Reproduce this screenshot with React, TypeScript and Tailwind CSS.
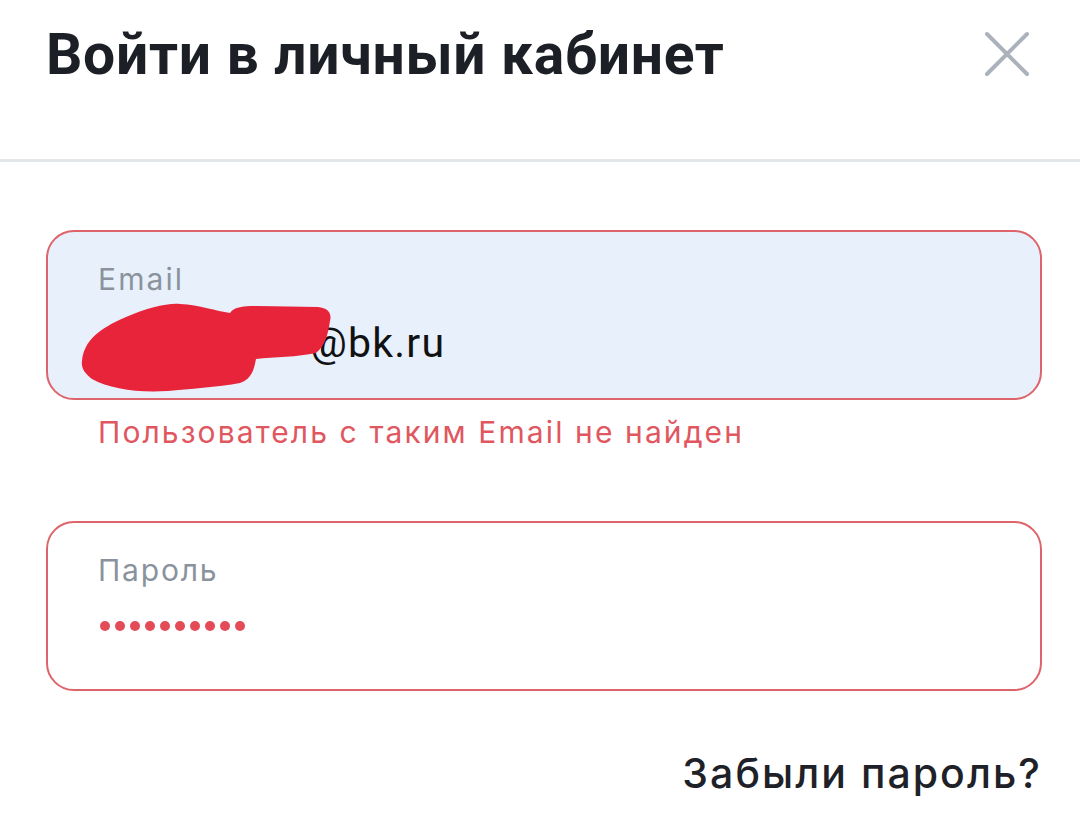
const Scribble = () => (
    <svg className="absolute left-[-20px] top-[-20px]" width="260" height="95" viewBox="0 0 260 95">
        <path
            d="M4 62 C6 42 20 30 48 18 C70 9 88 4 102 5 C122 6 138 12 152 14 C156 8 164 7 180 7 L240 8 C250 9 254 14 252 22 C250 34 248 46 238 54 C220 58 196 58 178 60 C176 70 174 80 162 84 C140 88 110 90 90 92 C60 94 32 90 14 80 C6 74 3 68 4 62 Z"
            fill="#e8243a"
        />
    </svg>
);

const CloseIcon = () => (
    <svg width="46" height="46" viewBox="0 0 46 46" className="mt-[7px]">
        <path d="M3 3 L43 43 M43 3 L3 43" stroke="#abb2bb" strokeWidth="4" strokeLinecap="round" />
    </svg>
);

export default function App() {
    return (
        <div className="w-[1080px] h-[828px] bg-white overflow-hidden" style={{ fontFamily: "Roboto, 'Noto Sans', sans-serif" }}>
            {/* Header */}
            <div className="flex items-start justify-between pl-[46px] pr-[50px] pt-[24px] h-[162px] border-b-[3px] border-[#e3e7ea]">
                <h1 className="text-[57px] leading-[62px] font-bold text-[#1c2026] tracking-[0.012em]">Войти в личный кабинет</h1>
                <CloseIcon />
            </div>

            <div className="pl-[46px] pr-[38px] pt-[68px]" style={{ fontFamily: "Inter, 'Noto Sans', sans-serif" }}>
                {/* Email */}
                <div className="h-[170px] rounded-[28px] border-2 border-[#de646b] bg-[#e8f0fb] px-[50px] pt-[30px]">
                    <div className="text-[30px] leading-[34px] text-[#8a939d] tracking-[0.07em]">Email</div>
                    <div className="relative mt-[23px] text-[41px] leading-[48px] text-[#111] tracking-[0.03em] pl-[212px]" style={{ fontFamily: "Roboto, sans-serif" }}>
                        <span>@bk.ru</span>
                        <Scribble />
                    </div>
                </div>
                <div className="pl-[52px] pt-[14px] text-[30px] leading-[36px] text-[#e0575f] tracking-[0.07em]">Пользователь с таким Email не найден</div>

                {/* Password */}
                <div className="mt-[71px] h-[170px] rounded-[28px] border-2 border-[#de646b] bg-white px-[50px] pt-[30px]">
                    <div className="text-[30px] leading-[34px] text-[#8a939d] tracking-[0.06em]">Пароль</div>
                    <div className="mt-[34px] flex gap-[5px] pl-[2px]">
                        {Array.from({ length: 10 }).map((_, i) => (
                            <span key={i} className="w-[10px] h-[10px] rounded-full bg-[#e34b57]" />
                        ))}
                    </div>
                </div>

                <div className="flex justify-end pt-[58px]">
                    <span className="text-[41px] leading-[48px] font-medium text-[#1e2228] tracking-[0.05em]">Забыли пароль?</span>
                </div>
            </div>
        </div>
    );
}
